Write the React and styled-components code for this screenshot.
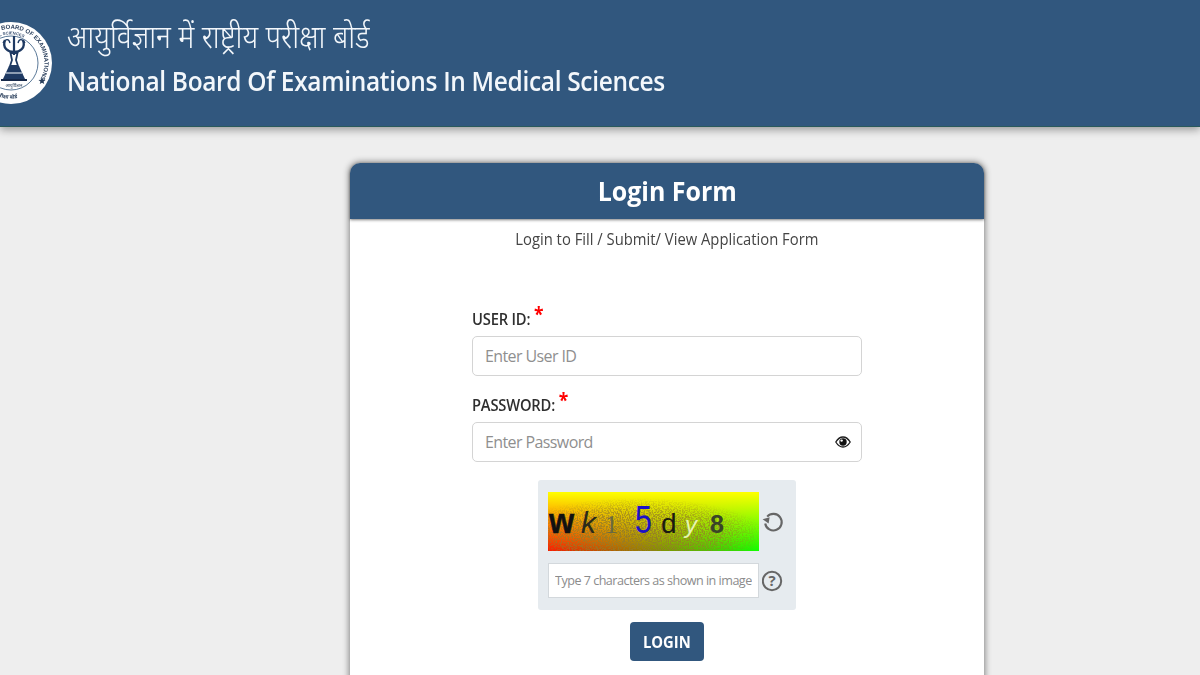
import React from 'react';
import styled, { createGlobalStyle } from 'styled-components';

const GlobalStyle = createGlobalStyle`
  html, body {
    margin: 0;
    padding: 0;
    height: 100%;
    overflow: hidden;
    background: #eeeeee;
    font-family: "Open Sans", "Noto Sans", sans-serif;
  }
`;

const Page = styled.div`
  height: 675px;
  overflow: hidden;
`;

const Header = styled.header`
  box-sizing: border-box;
  height: 127px;
  background: #31577e;
  border-bottom: 1px solid #2a5a5c;
  box-shadow: 0 3px 8px rgba(0, 0, 0, 0.35);
  display: flex;
  align-items: flex-start;
  overflow: hidden;
`;

const Seal = styled.svg`
  width: 54px;
  height: 88px;
  margin-top: 19px;
  margin-right: 13px;
  flex: none;
  filter: blur(0.35px);
`;

const Titles = styled.div`
  display: flex;
  flex-direction: column;
  padding-top: 18px;
  color: #f3f7fb;
  filter: blur(0.3px);
`;

const HindiTitle = styled.div`
  font-family: "Noto Sans Devanagari", "Noto Sans", "Lohit Devanagari", sans-serif;
  font-size: 32px;
  font-weight: 300;
  line-height: 44px;
  height: 43px;
  white-space: nowrap;
  transform: scaleX(0.888);
  transform-origin: left center;
`;

const EnglishTitle = styled.div`
  font-size: 27px;
  font-weight: 600;
  line-height: 40px;
  letter-spacing: -0.35px;
  white-space: nowrap;
  transform: scaleX(0.906);
  transform-origin: left center;
`;

const Main = styled.main`
  padding: 36px 216px 0 350px;
`;

const Card = styled.section`
  width: 634px;
  height: 560px;
  background: #fff;
  border-radius: 10px 10px 0 0;
  box-shadow: 0 0 6px 1px rgba(0, 0, 0, 0.45);
`;

const CardHead = styled.div`
  height: 56px;
  background: #31577e;
  border-radius: 10px 10px 0 0;
  box-shadow: 0 1px 3px rgba(0, 0, 0, 0.5);
  display: flex;
  align-items: center;
  justify-content: center;
  padding-bottom: 2px;
  box-sizing: border-box;
  color: #fff;
  font-size: 27px;
  font-weight: 700;
`;

const Squeezed = styled.span`
  display: inline-block;
  transform: scaleX(0.925);
`;

const SubTitle = styled.p`
  margin: 9px 0 0;
  text-align: center;
  color: #444;
  font-size: 16px;
  line-height: 22px;
`;

const Form = styled.form`
  width: 390px;
  margin: 0 auto;
  padding: 57px 0 0;
`;

const Label = styled.label`
  display: block;
  height: 29px;
  font-size: 16px;
  font-weight: 600;
  letter-spacing: -0.2px;
  line-height: 25px;
  color: #2f2f2f;
  transform: scaleX(0.92);
  transform-origin: left center;
`;

const Star = styled.span`
  color: #f00;
  font-size: 19px;
  font-weight: 700;
  margin-left: 4px;
  line-height: 1;
  position: relative;
  top: -4px;
`;

const FieldWrap = styled.div`
  position: relative;
  height: 40px;
  margin-bottom: 17px;
`;

const TextInput = styled.input`
  box-sizing: border-box;
  width: 100%;
  height: 100%;
  border: 1px solid #d4d4d4;
  border-radius: 5px;
  padding: 0 12px;
  font-family: inherit;
  font-size: 16px;
  letter-spacing: -0.6px;
  background: #fff;
  &::placeholder {
    color: #8f8f8f;
    opacity: 1;
  }
`;

const EyeButton = styled.span`
  position: absolute;
  right: 11px;
  top: 13px;
  display: flex;
`;

const CaptchaBox = styled.div`
  box-sizing: border-box;
  width: 258px;
  height: 130px;
  margin: 18px auto 0;
  padding: 12px 0 0 10px;
  background: #e6ebef;
  border-radius: 3px;
  display: grid;
  grid-template-columns: 211px 24px;
  grid-template-rows: 59px 35px;
  column-gap: 2px;
  row-gap: 12px;
  align-items: center;
  justify-items: center;
`;

const CaptchaInput = styled.input`
  box-sizing: border-box;
  width: 211px;
  height: 35px;
  border: 1px solid #d3d8dc;
  padding: 0 6px;
  font-family: inherit;
  font-size: 12.6px;
  letter-spacing: -0.52px;
  background: #fff;
  &::placeholder {
    color: #8c8c8c;
    opacity: 1;
  }
`;

const LoginButton = styled.button`
  display: block;
  width: 74px;
  height: 39px;
  margin: 12px auto 0;
  border: 0;
  border-radius: 4px;
  background: #31577e;
  color: #fff;
  font-family: inherit;
  font-size: 16px;
  font-weight: 700;
`;

const SealDrawing = () => (
  <Seal viewBox="0 0 54 88">
    <defs>
      <path id="sealOuter" d="M1.5 11 A34 34 0 0 1 37 65" />
      <path id="sealInner" d="M-17 35 A28.5 28.5 0 0 1 36 32" />
      <path id="sealLower" d="M-20 62 A35.5 35.5 0 0 0 34 71" />
    </defs>
    <circle cx="11" cy="44" r="41" fill="#fff" />
    <circle cx="11" cy="44" r="27" fill="none" stroke="#31577e" strokeWidth="0.8" />
    <text fontFamily="Liberation Sans, sans-serif" fontSize="6" fontWeight="700" fill="#2a3f5c">
      <textPath href="#sealOuter">BOARD OF EXAMINATIONS</textPath>
    </text>
    <text fontFamily="Liberation Sans, sans-serif" fontSize="4.2" fontWeight="700" fill="#3c5273">
      <textPath href="#sealInner" startOffset="12%">MEDICAL SCIENCES</textPath>
    </text>
    <path d="M5 21 C2 29 8 33 14 33 C20 33 26 29 23 21" fill="none" stroke="#1f3a63" strokeWidth="2.4" />
    <path d="M3 24 C6 19 9 20 10 24 M25 24 C22 19 19 20 18 24" fill="none" stroke="#1f3a63" strokeWidth="1.4" />
    <path d="M14 17 V36" stroke="#1f3a63" strokeWidth="2.2" />
    <path d="M10.5 34 H17.5 L16 41 L18 47 H10 L12 41 Z" fill="none" stroke="#1f3a63" strokeWidth="1.8" />
    <path d="M9 47 H19 L25 60 H3 Z" fill="#1f3a63" />
    <path d="M6 54 H22" stroke="#e8eef6" strokeWidth="1.1" />
    <path d="M1 60 H27 V62 H1 Z" fill="#16294a" />
    <text x="14" y="68" textAnchor="middle" fontFamily="Noto Sans Devanagari, Noto Sans, sans-serif" fontSize="4.4" fill="#2a3f5c">आयुर्विज्ञान</text>
    <text fontFamily="Noto Sans Devanagari, Noto Sans, sans-serif" fontSize="5.2" fontWeight="700" fill="#2a3f5c">
      <textPath href="#sealLower" startOffset="14%">राष्ट्रीय परीक्षा बोर्ड</textPath>
    </text>
    <path d="M42 58.4 l1 2.3 2.5.2 -1.9 1.6 .6 2.5 -2.2-1.3 -2.2 1.3 .6-2.5 -1.9-1.6 2.5-.2z" fill="#2a3f5c" />
  </Seal>
);

const CaptchaImage = () => (
  <svg width="211" height="59" viewBox="0 0 211 59">
    <defs>
      <linearGradient id="capBottom" x1="0" y1="0" x2="1" y2="0">
        <stop offset="0" stopColor="#ff1600" />
        <stop offset="1" stopColor="#10ff00" />
      </linearGradient>
      <linearGradient id="capTop" x1="0" y1="0" x2="0" y2="1">
        <stop offset="0" stopColor="#ffff00" />
        <stop offset="1" stopColor="#ffff00" stopOpacity="0" />
      </linearGradient>
      <filter id="capNoise" x="0" y="0" width="100%" height="100%">
        <feTurbulence type="fractalNoise" baseFrequency="0.75" numOctaves="2" seed="4" />
        <feColorMatrix values="0 0 0 0 0.3  0 0 0 0 0.2  0 0 0 0 0.02  6 0 0 0 -2.6" />
      </filter>
      <radialGradient id="capFade" cx="0.42" cy="0.72" r="0.62">
        <stop offset="0" stopColor="#fff" />
        <stop offset="0.6" stopColor="#aaa" />
        <stop offset="1" stopColor="#000" />
      </radialGradient>
      <mask id="capMask">
        <rect width="211" height="59" fill="url(#capFade)" />
      </mask>
    </defs>
    <rect width="211" height="59" fill="url(#capBottom)" />
    <rect width="211" height="59" fill="url(#capTop)" />
    <rect width="211" height="59" filter="url(#capNoise)" mask="url(#capMask)" />
    <g fontFamily="Liberation Sans, sans-serif">
      <text transform="translate(1 41) scale(.9 1)" fontSize="36" fontWeight="700" fill="#111" stroke="#111" strokeWidth="0.5">w</text>
      <text x="33" y="41" fontSize="30" fontStyle="italic" fill="#2a2a1a">k</text>
      <text x="57" y="41" fontSize="26" fontFamily="Liberation Serif, serif" fill="#6a6a40">1</text>
      <text transform="translate(87 41) scale(.8 1)" fontSize="38" fill="#1c10c8">5</text>
      <text x="113" y="41" fontSize="28" fill="#1b1b10">d</text>
      <text x="137" y="41" fontSize="24" fontStyle="italic" fill="#e6f4b0">y</text>
      <text x="162" y="41" fontSize="25" fontWeight="700" fill="#3a4528">8</text>
    </g>
  </svg>
);

const RefreshIcon = () => (
  <svg width="22" height="22" viewBox="0 0 22 22" fill="none">
    <path d="M5.2 5.6 A8.3 8.3 0 1 1 3.2 12.5" stroke="#666" strokeWidth="2.1" />
    <path d="M0.6 8.2 L6.6 12.4 L7.6 6.2 Z" fill="#666" />
  </svg>
);

const HelpIcon = () => (
  <svg width="22" height="22" viewBox="0 0 22 22">
    <circle cx="10" cy="11" r="9.2" fill="none" stroke="#666" strokeWidth="2" />
    <text x="10" y="16.2" textAnchor="middle" fontFamily="Open Sans, sans-serif" fontSize="15" fontWeight="700" fill="#666">?</text>
  </svg>
);

const EyeIcon = () => (
  <svg width="16" height="14" viewBox="0 0 16 14">
    <path d="M.8 7 C3 3.4 5.4 2 8 2 C10.6 2 13 3.4 15.2 7 C13 10.6 10.6 12 8 12 C5.4 12 3 10.6 .8 7 Z" fill="#fff" stroke="#1c1c1c" strokeWidth="1.3" />
    <circle cx="8" cy="7" r="3.7" fill="#111" />
    <circle cx="6.6" cy="5.6" r="1.2" fill="#fff" />
  </svg>
);

export default function App() {
  return (
    <Page>
      <GlobalStyle />
      <Header>
        <SealDrawing />
        <Titles>
          <HindiTitle>आयुर्विज्ञान में राष्ट्रीय परीक्षा बोर्ड</HindiTitle>
          <EnglishTitle>National Board Of Examinations In Medical Sciences</EnglishTitle>
        </Titles>
      </Header>
      <Main>
        <Card>
          <CardHead><Squeezed>Login Form</Squeezed></CardHead>
          <SubTitle><Squeezed>Login to Fill / Submit/ View Application Form</Squeezed></SubTitle>
          <Form>
            <Label>USER ID:<Star>*</Star></Label>
            <FieldWrap>
              <TextInput placeholder="Enter User ID" />
            </FieldWrap>
            <Label>PASSWORD:<Star>*</Star></Label>
            <FieldWrap>
              <TextInput placeholder="Enter Password" />
              <EyeButton><EyeIcon /></EyeButton>
            </FieldWrap>
            <CaptchaBox>
              <CaptchaImage />
              <RefreshIcon />
              <CaptchaInput placeholder="Type 7 characters as shown in image" />
              <HelpIcon />
            </CaptchaBox>
            <LoginButton type="button"><Squeezed>LOGIN</Squeezed></LoginButton>
          </Form>
        </Card>
      </Main>
    </Page>
  );
}
